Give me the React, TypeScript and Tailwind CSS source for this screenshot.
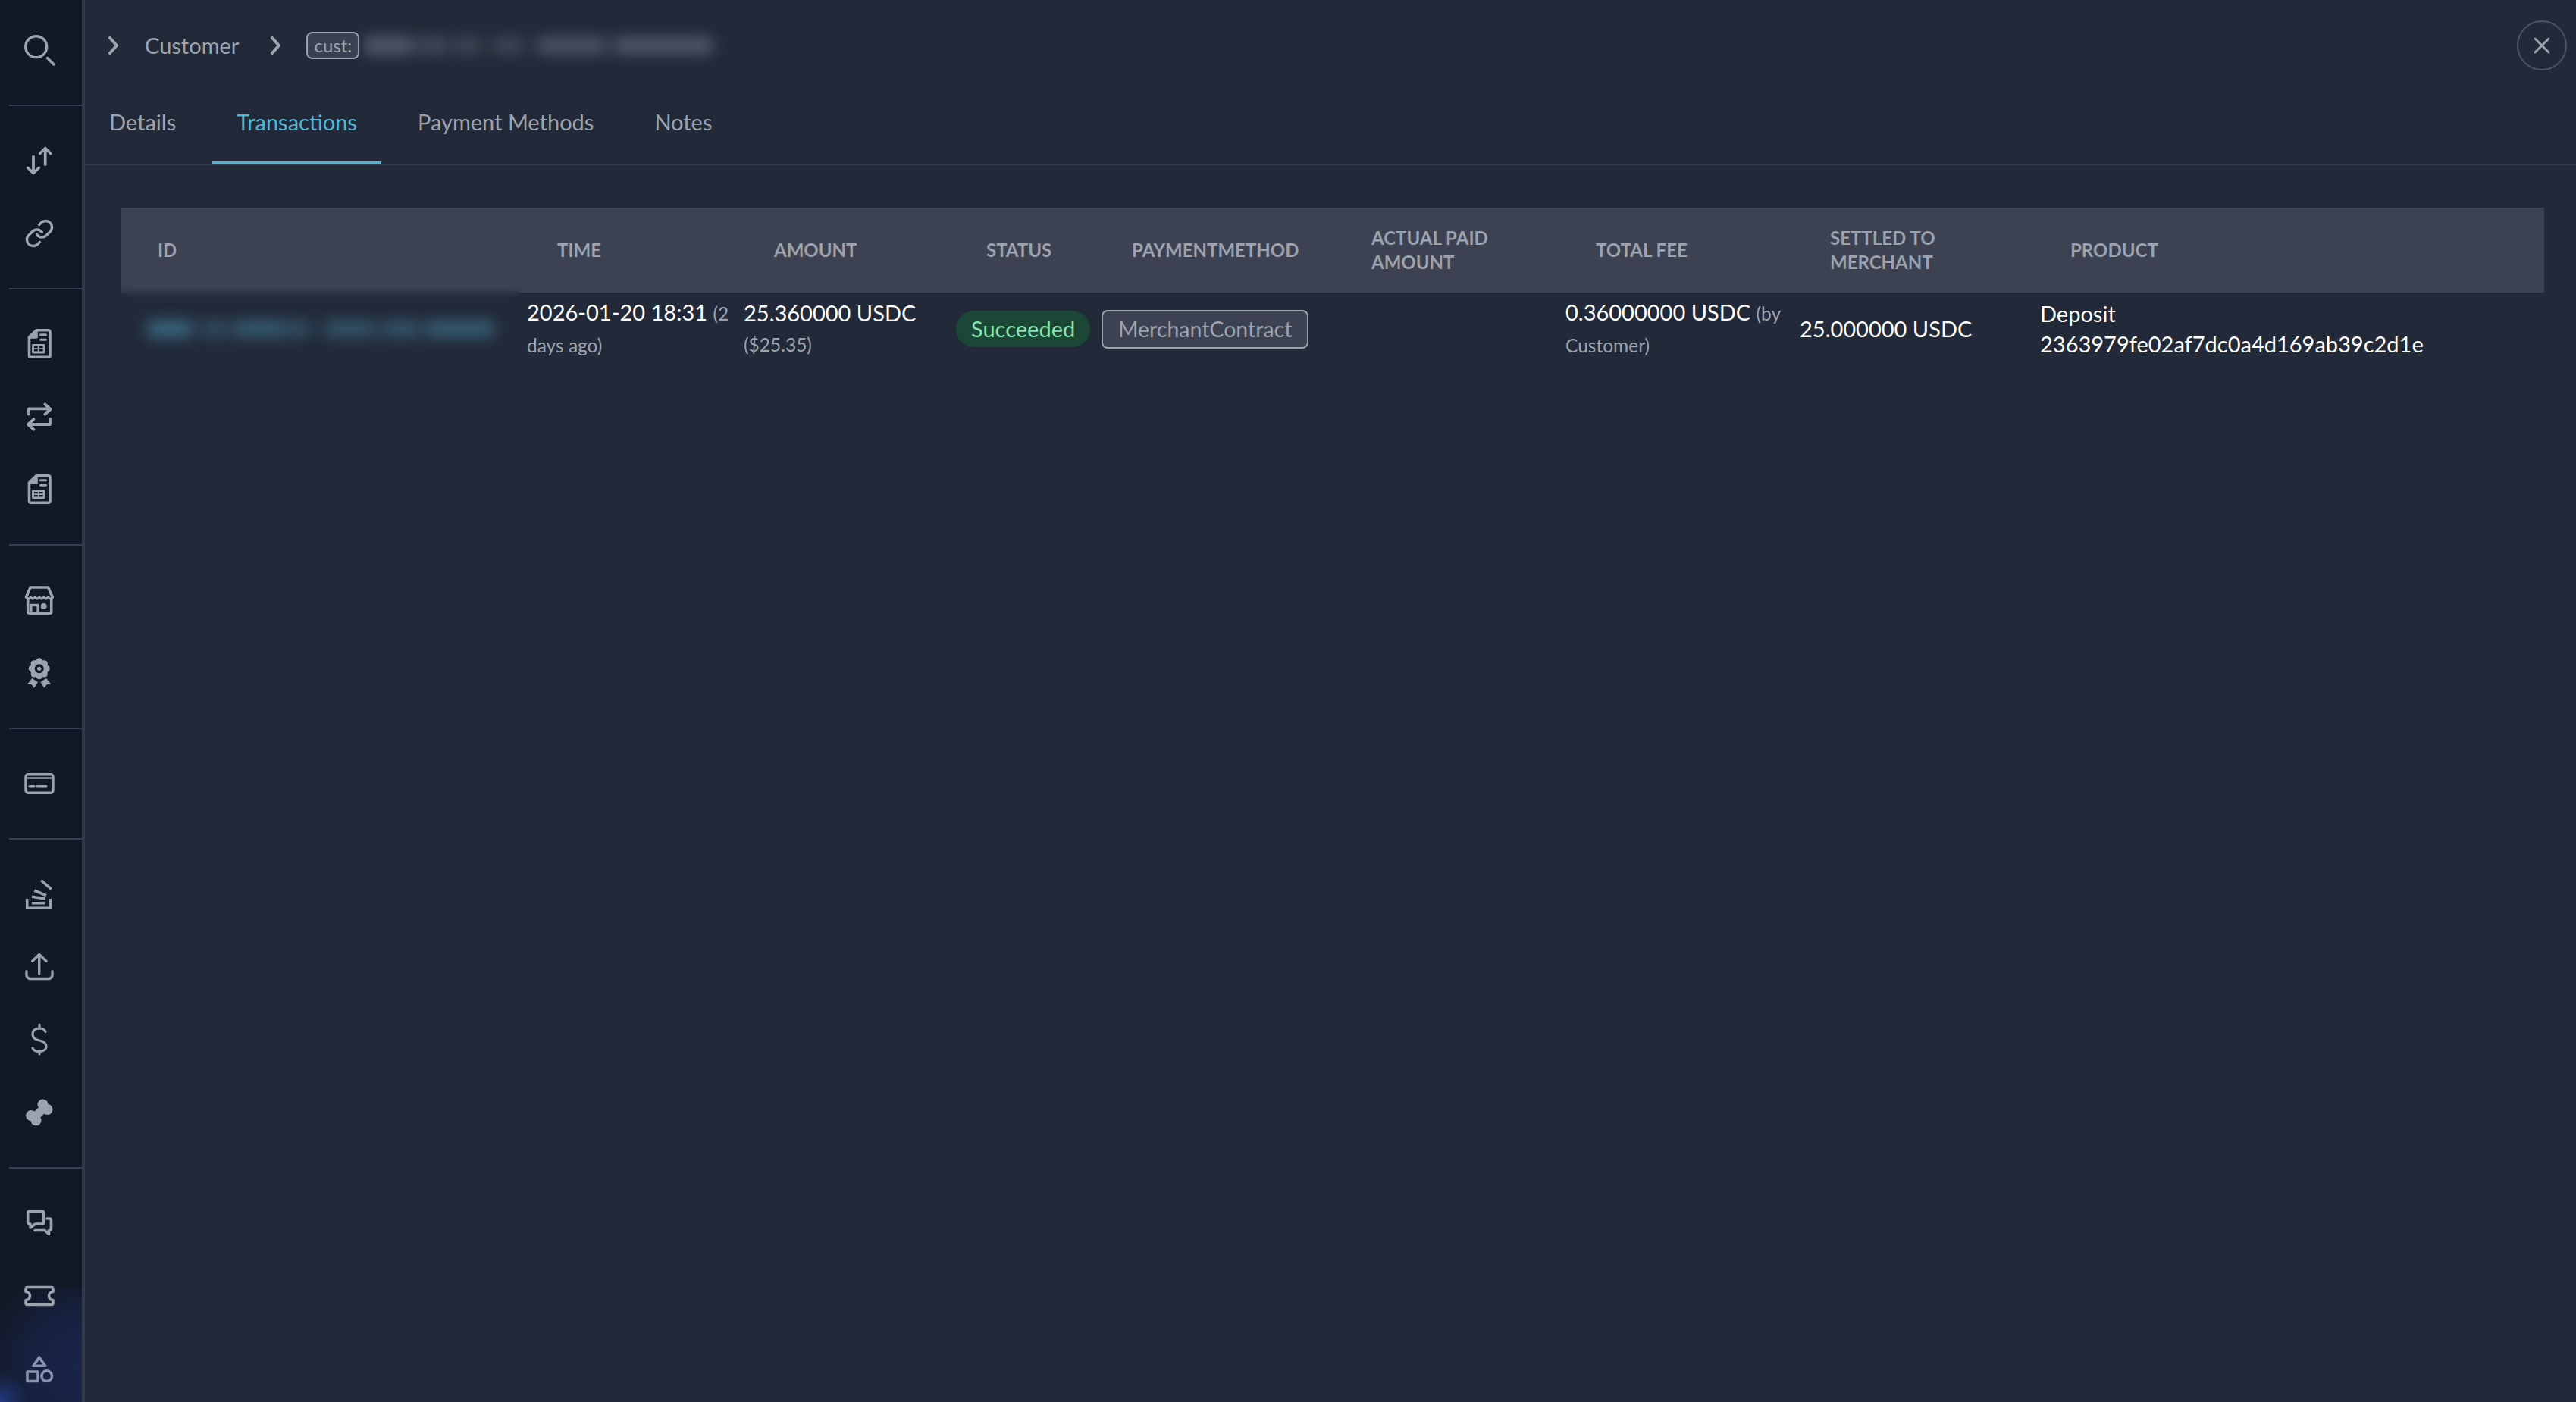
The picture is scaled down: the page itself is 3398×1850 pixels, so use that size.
import React from 'react';
import { Link, X } from 'lucide-react';

const Svg = ({ children, sw = 3.6 }: { children: React.ReactNode; sw?: number }) => (
  <svg
    viewBox="0 0 48 48"
    className="h-12 w-12 overflow-visible"
    fill="none"
    stroke="currentColor"
    strokeWidth={sw}
    strokeLinecap="round"
    strokeLinejoin="round"
  >
    {children}
  </svg>
);

const SearchIcon = () => (
  <Svg sw={3.4}>
    <circle cx="19.7" cy="21.7" r="14" />
    <path d="M34.5 36.5 43 45" />
  </Svg>
);

const ArrowsIcon = () => (
  <Svg sw={3.8}>
    <path d="M31.7 29V8M24.7 14.5l7-7 7 7" />
    <path d="M16 19v21M8.7 33.5l7.3 7 7.3-7" />
  </Svg>
);

const InvoiceIcon = () => (
  <Svg sw={3.6}>
    <path d="M20 5.7h16a2 2 0 0 1 2 2v31.6a2 2 0 0 1-2 2H12.5a2 2 0 0 1-2-2V15z" />
    <path d="M20 5.7V15h-9.500z" fill="currentColor" />
    <path d="M25.500 11.700h7M25.500 18.300h7" strokeWidth="3" />
    <rect x="15.500" y="25.500" width="14.500" height="9.500" strokeWidth="2.800" />
    <path d="M15.500 30.200h14.500M22.700 25.500v9.500" strokeWidth="1.800" />
  </Svg>
);

const RepeatIcon = () => (
  <Svg sw={3.8}>
    <path d="M10 20.700v-7.400h28M31.300 7.300l7.200 6.700-7.200 6.700" />
    <path d="M38 26.700V34H10M16.300 27.300 9 34l7.300 6.700" />
  </Svg>
);

const StoreIcon = () => (
  <Svg sw={3.6}>
    <path d="M12 7h23.500l5.800 13q-2.800 4-5.800 0-2.900 4-5.800 0-2.900 4-5.800 0-2.900 4-5.800 0-2.900 4-5.800 0-3 4-5.800 0z" />
    <path d="M8.700 23v16.300a2 2 0 0 0 2 2h27a2 2 0 0 0 2-2V23" />
    <path d="M12.700 41V30.500h9.500V41" />
    <circle cx="29.700" cy="32" r="4" fill="currentColor" stroke="none" />
  </Svg>
);

const AwardIcon = () => {
  const bumps = [0, 45, 90, 135, 180, 225, 270, 315];
  return (
    <svg viewBox="0 0 48 48" className="h-12 w-12 overflow-visible" fill="currentColor">
      <circle cx="23.700" cy="18.300" r="12" />
      {bumps.map((deg) => (
        <circle
          key={deg}
          cx={23.7 + 9.8 * Math.cos((deg * Math.PI) / 180)}
          cy={18.3 + 9.8 * Math.sin((deg * Math.PI) / 180)}
          r="4.200"
        />
      ))}
      <circle cx="23.700" cy="18.300" r="6" fill="#121825" />
      <circle cx="23.700" cy="18.300" r="2.600" />
      <path d="M8 38.700 14.300 31l7.700 5-5 7.700-3.300-4.400z" />
      <path d="M39.400 38.700 33 31l-7.600 5 5 7.700 3.300-4.400z" />
    </svg>
  );
};

const CardIcon = () => (
  <Svg sw={3.4}>
    <rect x="6" y="11.700" width="36" height="24.500" rx="3" />
    <path d="M6 16.500h36" strokeWidth="2.400" />
    <path d="M11 27.700h6M21 27.700h12" strokeWidth="3.400" />
  </Svg>
);

const StackIcon = () => (
  <Svg sw={3.6}>
    <path d="M7.700 30v12.300h30.600V30" strokeLinecap="butt" strokeLinejoin="miter" />
    <path d="M14 35.700h17.300M14 27.300 32 30M17.300 19l15.700 6.700M26.300 5.700l13.400 11.600" strokeLinecap="butt" />
  </Svg>
);

const UploadIcon = () => (
  <Svg sw={3.4}>
    <path d="M7 29.700V34a5 5 0 0 0 5 5.500h24a5 5 0 0 0 5-5.500v-4.300" />
    <path d="M23.700 33V8M14.700 16.300l9-8.800 9.300 8.800" />
  </Svg>
);

const DollarIcon = () => (
  <Svg sw={3.2}>
    <path d="M32 13.500C31 10.500 28 9 24 9c-6 0-9 3-9 8 0 5 4 7 9 8 5 1 9 3 9 8 0 4-4 6.500-9 6.500-5 0-8-1.500-9-4.500" />
    <path d="M24 4v5M24 39.500V43" />
  </Svg>
);

const BoneIcon = () => (
  <svg viewBox="0 0 48 48" className="h-12 w-12 overflow-visible" fill="currentColor" stroke="currentColor">
    <circle cx="28.500" cy="13.500" r="7" strokeWidth="0" />
    <circle cx="34.500" cy="20" r="7" strokeWidth="0" />
    <circle cx="13" cy="28" r="7" strokeWidth="0" />
    <circle cx="19.500" cy="34.500" r="7" strokeWidth="0" />
    <path d="M31 17 17 31" strokeWidth="11" />
  </svg>
);

const ChatIcon = () => (
  <Svg sw={3.6}>
    <path d="M10.700 8.300h17a2 2 0 0 1 2 2V23a2 2 0 0 1-2 2H18.500L12 30v-5h-1.300a2 2 0 0 1-2-2V10.300a2 2 0 0 1 2-2z" />
    <path d="M34 18h3.500a2 2 0 0 1 2 2v11.500a2 2 0 0 1-2 2H36.500v5l-5.500-5H18" />
  </Svg>
);

const TicketIcon = () => (
  <Svg sw={3.6}>
    <path d="M8 12.500h32a2 2 0 0 1 2 2v4a5.500 5.500 0 0 0 0 11v4a2 2 0 0 1-2 2H8a2 2 0 0 1-2-2v-4a5.500 5.500 0 0 0 0-11v-4a2 2 0 0 1 2-2z" />
  </Svg>
);

const ShapesIcon = () => (
  <Svg sw={3.6}>
    <path d="M23.700 9 16 20.200h15.700z" />
    <rect x="8" y="28" width="14" height="12.500" />
    <circle cx="33.700" cy="33.700" r="6.800" />
  </Svg>
);

const Chevron = () => (
  <svg viewBox="0 0 16 24" className="h-6 w-4 shrink-0" fill="none" stroke="currentColor" strokeWidth="4" strokeLinecap="round" strokeLinejoin="round">
    <path d="M3 2l9 10-9 10" />
  </svg>
);

// blurred ids are just soft bars, the real value is not readable in the picture
const Redacted = ({ parts, color, height }: { parts: number[][]; color: string; height: string }) => (
  <div className={`flex items-center blur-[10px] ${height}`}>
    {parts.map(([gap, width, opacity], i) => (
      <div key={i} className={`h-full ${color}`} style={{ marginLeft: gap, width, opacity }} />
    ))}
  </div>
);

const groups = [
  [<SearchIcon />],
  [<ArrowsIcon />, <Link size={40} strokeWidth={2.1} />],
  [<InvoiceIcon />, <RepeatIcon />, <InvoiceIcon />],
  [<StoreIcon />, <AwardIcon />],
  [<CardIcon />],
  [<StackIcon />, <UploadIcon />, <DollarIcon />, <BoneIcon />],
  [<ChatIcon />, <TicketIcon />, <ShapesIcon />],
];

function Sidebar() {
  return (
    <aside className="relative h-full w-[112px] shrink-0 overflow-hidden border-r-4 border-[#333a4b] bg-[#121825]">
      <div className="absolute bottom-0 left-0 h-[150px] w-full bg-[radial-gradient(ellipse_at_100%_70%,#19244a_0%,#172140_45%,#121825_90%)]" />
      <div className="absolute bottom-0 left-0 h-10 w-10 bg-[radial-gradient(circle_at_0%_100%,#223a80_0%,transparent_70%)]" />
      {groups.map((items, g) => (
        <div key={g} className="relative">
          {g > 0 && <div className="ml-3 h-0.5 bg-[#374151]" />}
          <div className={g === 0 ? 'pt-4 pb-[26px]' : 'py-6'}>
            {items.map((icon, i) => (
              <div
                key={i}
                className={`flex h-24 w-[104px] items-center justify-center ${g === 6 && i === 2 ? 'text-[#8a92ad]' : 'text-[#9ca3af]'}`}
              >
                {icon}
              </div>
            ))}
          </div>
        </div>
      ))}
    </aside>
  );
}

const tabs = ['Details', 'Transactions', 'Payment Methods', 'Notes'];

const columns = [
  { label: 'ID', width: 'w-[527px]' },
  { label: 'Time', width: 'w-[286px]' },
  { label: 'Amount', width: 'w-[280px]' },
  { label: 'Status', width: 'w-[192px]' },
  { label: 'PaymentMethod', width: 'w-[316px]' },
  { label: 'Actual Paid Amount', width: 'w-[296px]' },
  { label: 'Total Fee', width: 'w-[309px]' },
  { label: 'Settled to Merchant', width: 'w-[317px]' },
  { label: 'Product', width: 'w-[673px]' },
];

const Muted = ({ children }: { children: React.ReactNode }) => (
  <span className="text-[24.500px] text-[#9ca3af]">{children}</span>
);

const cell = 'px-2 pt-[6px] pb-[10px] leading-10';

export default function App() {
  return (
    <div className="flex h-screen w-full overflow-hidden bg-[#222938] font-[family-name:Lato,sans-serif] text-[29px] text-[#9ca3af]">
      <Sidebar />
      <main className="min-w-0 flex-1">
        <div className="flex h-[108px] items-center pt-3 pr-3">
          <div className="ml-[30px] flex items-center">
            <Chevron />
            <span className="ml-[33px]">Customer</span>
            <div className="ml-[41px]">
              <Chevron />
            </div>
            <span className="ml-[32px] flex h-9 w-[70px] items-center justify-center rounded-lg border-2 border-[#9ca3af] bg-[#374151] text-[24px] leading-none">
              cust:
            </span>
            <Redacted
              color="bg-[#5a6272]"
              height="h-5"
              parts={[[6, 66, 1], [6, 40, 0.65], [8, 34, 0.6], [16, 40, 0.6], [18, 92, 0.85], [10, 130, 0.95]]}
            />
          </div>
          <button className="ml-auto flex h-[66px] w-[66px] items-center justify-center rounded-full border-2 border-[#4b5563]">
            <X size={36} strokeWidth={1.9} />
          </button>
        </div>

        <nav className="flex h-[110px] gap-4 border-b-2 border-[#374151]">
          {tabs.map((tab) => (
            <div
              key={tab}
              className={`flex h-[108px] items-center border-b-[3px] px-8 ${tab === 'Transactions' ? 'border-[#4fb6d6] text-[#4fb6d6]' : 'border-transparent'}`}
            >
              {tab}
            </div>
          ))}
        </nav>

        <div className="mt-14 mr-[42px] ml-12">
          <table className="w-full table-fixed border-collapse">
            <thead>
              <tr className="bg-[#3c4252]">
                {columns.map((c) => (
                  <th key={c.label} className={`${c.width} py-6 pl-12 text-left text-[24px] leading-8 font-bold uppercase`}>
                    {c.label}
                  </th>
                ))}
              </tr>
            </thead>
            <tbody>
              <tr className="text-white">
                <td className={`relative ${cell}`}>
                  <div className="absolute inset-x-0 -top-2 bottom-0 backdrop-blur-[5px]" />
                  <Redacted
                    color="bg-[#3d6f87]"
                    height="h-5"
                    parts={[[26, 60, 1], [12, 34, 0.6], [8, 62, 0.8], [0, 40, 0.6], [18, 68, 0.7], [8, 50, 0.7], [8, 90, 0.85]]}
                  />
                </td>
                <td className={cell}>
                  2026-01-20 18:31 <Muted>(2 days ago)</Muted>
                </td>
                <td className={cell}>
                  25.360000 USDC
                  <br />
                  <Muted>($25.35)</Muted>
                </td>
                <td className={cell}>
                  <span className="inline-flex h-12 items-center rounded-full bg-[#1c4636] px-5 text-[#86e2b0]">Succeeded</span>
                </td>
                <td className={cell}>
                  <span className="inline-flex h-[51px] items-center rounded-lg border-2 border-[#9ca3af] bg-[#3c4252] px-5 text-[28.500px] text-[#9ca3af]">
                    MerchantContract
                  </span>
                </td>
                <td className={cell} />
                <td className={cell}>
                  0.36000000 USDC <Muted>(by Customer)</Muted>
                </td>
                <td className={cell}>25.000000 USDC</td>
                <td className={cell}>
                  Deposit
                  <br />
                  2363979fe02af7dc0a4d169ab39c2d1e
                </td>
              </tr>
            </tbody>
          </table>
        </div>
      </main>
    </div>
  );
}
